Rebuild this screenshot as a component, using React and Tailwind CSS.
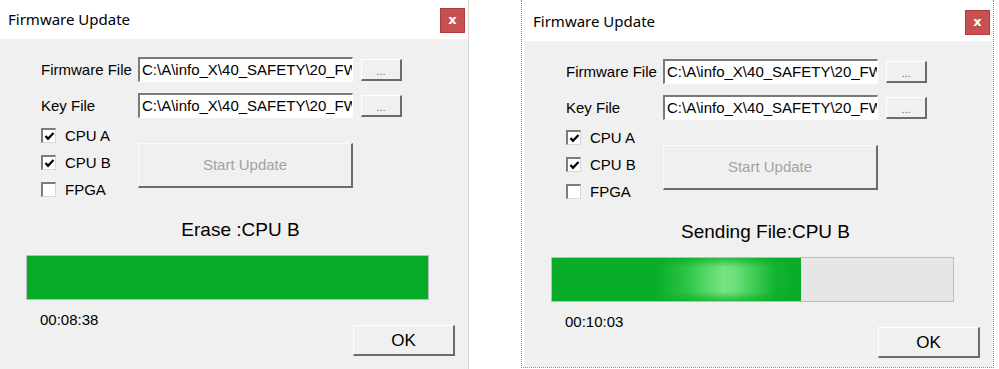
import React from 'react';

const PATH = "C:\\A\\info_X\\40_SAFETY\\20_FW\\";

const Check = ({ checked, label }) => (
  <div className="flex h-[27px] items-center">
    <div className="flex h-[15px] w-[15px] items-center justify-center border-t-2 border-l-2 border-b border-r border-t-[#7c7c7c] border-l-[#7c7c7c] border-b-[#d8d8d8] border-r-[#d8d8d8] bg-white">
      {checked && (
        <svg width="11" height="11" viewBox="0 0 11 11">
          <path d="M1.5 5 L4 7.8 L9.5 2" fill="none" stroke="#000" strokeWidth="2.2" />
        </svg>
      )}
    </div>
    <span className="ml-[9px] text-[15px] leading-none">{label}</span>
  </div>
);

const FileRow = ({ label, className }) => (
  <div className={`flex h-[25px] items-center ${className}`}>
    <span className="w-[97px] text-[15px] leading-none">{label}</span>
    <div className="h-[25px] w-[215px] overflow-hidden whitespace-nowrap border-t-2 border-l-2 border-b border-r border-t-[#7a7a7a] border-l-[#7a7a7a] border-b-white border-r-white bg-white pl-[2px] text-[15px] leading-[22px]">
      {PATH}
    </div>
    <button className="ml-[8px] mt-[1px] flex h-[22px] w-[41px] items-end justify-center border-t border-l border-b-2 border-r-2 border-t-white border-l-white border-b-[#6b6b6b] border-r-[#6b6b6b] bg-[#f0f0f0] pb-[2px] text-[11px] leading-none text-[#6a6a6a]">
      ...
    </button>
  </div>
);

const Dialog = ({ status, time, progress, glow, className }) => (
  <div className={`flex flex-col bg-[#f0f0f0] font-['Liberation_Sans',Arial,sans-serif] text-black ${className}`}>
    <div className="flex h-[39px] shrink-0 items-start justify-between bg-white">
      <span className="ml-[8px] mt-[9px] font-['Noto_Sans',sans-serif] text-[15px] leading-[20px]">Firmware Update</span>
      <div className="mr-[3px] mt-[8px] flex h-[25px] w-[25px] items-center justify-center border border-[#b13a3a] bg-[#c75050] pb-[2px] font-['DejaVu_Sans',sans-serif] text-[13px] font-bold leading-none text-white">
        x
      </div>
    </div>

    <div className="flex flex-col">
      <div className="pl-[41px] pt-[18px]">
        <FileRow label="Firmware File" />
        <FileRow label="Key File" className="mt-[11px]" />
        <div className="mt-[4px] flex">
          <div className="flex w-[97px] flex-col">
            <Check checked label="CPU A" />
            <Check checked label="CPU B" />
            <Check label="FPGA" />
          </div>
          <button className="mt-[21px] h-[45px] w-[215px] border-t border-l border-b-2 border-r-2 border-t-[#fafafa] border-l-[#fafafa] border-b-[#6b6b6b] border-r-[#6b6b6b] bg-[#f0f0f0] text-[15px] text-[#a3a3a3]">
            Start Update
          </button>
        </div>
      </div>

      <div className="mt-[15px] h-[24px] pl-[13px] text-center text-[19px] leading-[24px]">{status}</div>

      <div className="ml-[26px] mt-[13px] h-[45px] w-[403px] border border-[#bcbcbc] bg-[#e6e6e6]">
        <div className="relative h-full bg-[#06ab26]" style={{ width: `${progress}%` }}>
          {glow && (
            <>
              <div className="absolute inset-0 bg-[linear-gradient(90deg,#06ab26_0%,#08ad28_42%,#2cc444_54%,#5ad96a_63%,#76e482_69%,#6ade78_74%,#40cc55_81%,#12b22f_90%,#06ab26_100%)]" />
              <div className="absolute inset-0 bg-[linear-gradient(180deg,rgba(6,171,38,0.7)_0%,rgba(6,171,38,0)_22%,rgba(6,171,38,0)_78%,rgba(6,171,38,0.7)_100%)]" />
            </>
          )}
        </div>
      </div>

      <div className="mt-[11px] flex items-start">
        <span className="ml-[40px] text-[15px] leading-[18px]">{time}</span>
        <button className="ml-auto mr-[13px] mt-[14px] h-[31px] w-[102px] border-t border-l border-b-2 border-r-2 border-t-white border-l-white border-b-[#6b6b6b] border-r-[#6b6b6b] bg-[#f0f0f0] pt-[1px] text-[17px] leading-none">
          OK
        </button>
      </div>
    </div>
  </div>
);

export default function App() {
  return (
    <div className="flex h-[369px] w-[999px] overflow-hidden bg-white">
      <Dialog
        status="Erase :CPU B"
        time="00:08:38"
        progress={100}
        className="h-[369px] w-[469px] border-r border-r-[#d6d6d6]"
      />
      <div className="ml-[52px] h-[368px] w-[473px] border-l border-r border-b border-dotted border-[#8c8c8c] pl-[3px] pt-[2px]">
        <Dialog
          status="Sending File:CPU B"
          time="00:10:03"
          progress={62}
          glow
          className="h-[365px] w-[468px]"
        />
      </div>
    </div>
  );
}
